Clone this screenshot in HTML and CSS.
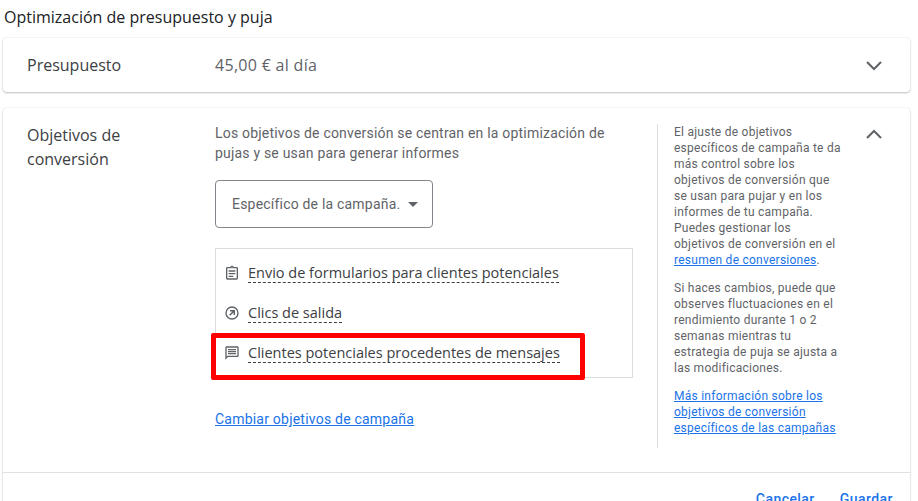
FILE: index.html

```html
<!DOCTYPE html>
<html lang="es">
<head>
    <meta charset="UTF-8">
    <title>Optimización de presupuesto y puja</title>
    <link rel="stylesheet" href="styles.css">
</head>
<body>
    <h2 class="section-title">Optimización de presupuesto y puja</h2>

    <div class="card card-budget">
        <div class="row-label">Presupuesto</div>
        <div class="row-value">45,00 € al día</div>
        <svg class="chevron" width="24" height="24" viewBox="0 0 24 24"><path d="M5 9l7 7 7-7" /></svg>
    </div>

    <div class="card card-goals">
        <div class="goals-main">
            <div class="row-label goals-label">Objetivos de conversión</div>
            <div class="goals-body">
                <p class="goals-intro">Los objetivos de conversión se centran en la optimización de pujas y se usan para generar informes</p>
                <div class="dropdown">
                    <span>Específico de la campaña.</span>
                    <span class="dropdown-arrow"></span>
                </div>
                <ul class="goal-list">
                    <li class="goal-item">
                        <svg class="goal-icon" width="16" height="16" viewBox="0 0 24 24"><path d="M19 3h-4.180C14.400 1.840 13.300 1 12 1s-2.400.84-2.820 2H5c-1.100 0-2 .9-2 2v15c0 1.100.9 2 2 2h14c1.100 0 2-.9 2-2V5c0-1.100-.9-2-2-2zm-7-.25c.41 0 .75.34.75.75s-.34.75-.75.75-.75-.34-.75-.75.34-.75.75-.75zM19 20H5V5h14v15zM7 8h10v2H7V8zm0 4h10v2H7v-2zm0 4h7v2H7v-2z" /></svg>
                        <span class="goal-name">Envio de formularios para clientes potenciales</span>
                    </li>
                    <li class="goal-item">
                        <svg class="goal-icon" width="16" height="16" viewBox="0 0 24 24"><path d="M12 2a10 10 0 1 0 0 20 10 10 0 0 0 0-20zm0 18a8 8 0 1 1 0-16 8 8 0 0 1 0 16z" /><path d="M9 7.500v2.200h3.700l-5 5 1.600 1.600 5-5V15h2.200V7.500z" /></svg>
                        <span class="goal-name">Clics de salida</span>
                    </li>
                    <li class="goal-item">
                        <svg class="goal-icon" width="16" height="16" viewBox="0 0 24 24"><path d="M20 2H4c-1.100 0-2 .9-2 2v18l4-4h14c1.100 0 2-.9 2-2V4c0-1.100-.9-2-2-2zm0 14H5.200L4 17.200V4h16v12zM6 12h12v2H6v-2zm0-3h12v2H6V9zm0-3h12v2H6V6z" /></svg>
                        <span class="goal-name">Clientes potenciales procedentes de mensajes</span>
                    </li>
                    <li class="highlight"></li>
                </ul>
                <a class="link change-link" href="#">Cambiar objetivos de campaña</a>
            </div>
            <aside class="goals-help">
                <p>El ajuste de objetivos específicos de campaña te da más control sobre los objetivos de conversión que se usan para pujar y en los informes de tu campaña. Puedes gestionar los objetivos de conversión en el <a class="link" href="#">resumen de conversiones</a>.</p>
                <p>Si haces cambios, puede que observes fluctuaciones en el rendimiento durante 1 o 2 semanas mientras tu estrategia de puja se ajusta a las modificaciones.</p>
                <p><a class="link" href="#">Más información sobre los objetivos de conversión específicos de las campañas</a></p>
            </aside>
            <svg class="chevron" width="24" height="24" viewBox="0 0 24 24"><path d="M5 15l7-7 7 7" /></svg>
        </div>
        <div class="card-actions">
            <a class="action" href="#">Cancelar</a>
            <a class="action" href="#">Guardar</a>
        </div>
    </div>
</body>
</html>
```

FILE: styles.css

```css
html, body {
    height: 501px;
    overflow: hidden;
}
body {
    margin: 0;
    padding: 0 8px 0 3px;
    background-color: #fff;
    color: #3c4043;
    font-family: Roboto, "Liberation Sans", sans-serif;
}
.section-title {
    margin: 0 0 11px 1px;
    padding-top: 8px;
    font-family: "Open Sans", sans-serif;
    font-size: 16px;
    font-weight: 400;
    line-height: 19px;
    color: #202124;
}
.card {
    background-color: #fff;
    border-radius: 4px;
    box-shadow: 0 1px 2px rgba(60, 64, 67, 0.3), 0 0 2px rgba(60, 64, 67, 0.12);
}
.card-budget {
    display: flex;
    align-items: center;
    height: 54px;
    margin-bottom: 16px;
    padding-left: 24px;
}
.row-label {
    box-sizing: border-box;
    width: 188px;
    padding-right: 40px;
    flex-shrink: 0;
    font-family: "Open Sans", sans-serif;
    font-size: 16px;
    line-height: 24px;
    color: #3c4043;
}
.row-value {
    flex: 1;
    font-family: "Open Sans", sans-serif;
    font-size: 16px;
    letter-spacing: 0.3px;
    color: #5f6368;
}
.chevron {
    flex-shrink: 0;
    margin-right: 24px;
}
.chevron path {
    fill: none;
    stroke: #5f6368;
    stroke-width: 2;
}
.card-goals {
    padding-top: 15px;
}
.goals-main {
    display: flex;
    align-items: flex-start;
    height: 349px;
    padding-left: 24px;
    border-bottom: 1px solid #e0e0e0;
}
.goals-body {
    width: 418px;
    flex-shrink: 0;
}
.goals-intro {
    margin: 0 0 17px;
    font-size: 14px;
    line-height: 20px;
    letter-spacing: 0.2px;
    color: #5f6368;
}
.dropdown {
    display: inline-flex;
    align-items: center;
    box-sizing: border-box;
    width: 218px;
    height: 48px;
    padding-left: 16px;
    border: 1px solid #80868b;
    border-radius: 4px;
    font-size: 14px;
    letter-spacing: 0.2px;
    color: #5f6368;
}
.dropdown-arrow {
    margin-left: 8px;
    border-top: 5px solid #5f6368;
    border-left: 5px solid transparent;
    border-right: 5px solid transparent;
}
.goal-list {
    position: relative;
    margin: 20px 0 31px;
    padding: 4px 0 0 8px;
    height: 130px;
    box-sizing: border-box;
    list-style: none;
    border: 1px solid #dadce0;
}
.goal-item {
    display: flex;
    align-items: center;
    height: 40px;
}
.goal-icon {
    flex-shrink: 0;
    margin-right: 8px;
    fill: #5f6368;
}
.goal-name {
    font-family: "Open Sans", sans-serif;
    font-size: 14.5px;
    line-height: 18px;
    color: #3c4043;
    border-bottom: 1px dashed #3c4043;
}
.highlight {
    position: absolute;
    left: -5px;
    top: 84px;
    width: 374px;
    height: 47px;
    box-sizing: border-box;
    border: 5px solid #f00;
    border-radius: 2px;
}
.link {
    color: #1a73e8;
    text-decoration: underline;
}
.change-link {
    font-size: 14px;
    letter-spacing: 0.22px;
}
.goals-help {
    box-sizing: border-box;
    width: 193px;
    height: 324px;
    flex-shrink: 0;
    margin: 1px 12px 0 24px;
    padding: 0 6px 0 16px;
    border-left: 1px solid #dadce0;
    font-size: 12px;
    line-height: 16px;
    letter-spacing: 0.25px;
    color: #5f6368;
}
.goals-help p {
    margin: 0 0 12px;
}
.card-actions {
    display: flex;
    justify-content: flex-end;
    gap: 25px;
    padding: 18px 17px 0 0;
}
.action {
    font-size: 14px;
    font-weight: 500;
    letter-spacing: 0.45px;
    color: #1a73e8;
    text-decoration: none;
}
```
